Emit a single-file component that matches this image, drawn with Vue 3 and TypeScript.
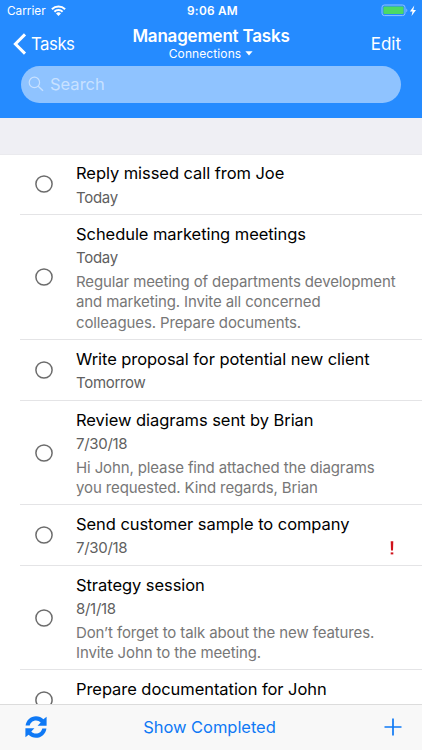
<script setup lang="ts">
interface Task {
  title: string
  due?: string
  notes?: string[]
  important?: boolean
  height: number
}

const tasks: Task[] = [
  { title: 'Reply missed call from Joe', due: 'Today', height: 60 },
  {
    title: 'Schedule marketing meetings',
    due: 'Today',
    notes: [
      'Regular meeting of departments development',
      'and marketing. Invite all concerned',
      'colleagues. Prepare documents.',
    ],
    height: 125,
  },
  { title: 'Write proposal for potential new client', due: 'Tomorrow', height: 61 },
  {
    title: 'Review diagrams sent by Brian',
    due: '7/30/18',
    notes: ['Hi John, please find attached the diagrams', 'you requested. Kind regards, Brian'],
    height: 104,
  },
  { title: 'Send customer sample to company', due: '7/30/18', important: true, height: 61 },
  {
    title: 'Strategy session',
    due: '8/1/18',
    notes: ['Don’t forget to talk about the new features.', 'Invite John to the meeting.'],
    height: 104,
  },
  { title: 'Prepare documentation for John', height: 61 },
]
</script>

<template>
  <div class="screen">
    <header class="header">
      <div class="status">
        <div class="carrier">
          <span>Carrier</span>
          <svg class="wifi" width="15" height="12" viewBox="0 0 15 12">
            <path d="M.9 4.200a9.400 9.400 0 0 1 13.200 0M3.400 6.800a5.800 5.800 0 0 1 8.200 0" fill="none" stroke="#fff" stroke-width="2" />
            <path d="M7.500 11 5 8.500a3.600 3.600 0 0 1 5 0z" fill="#fff" />
          </svg>
        </div>
        <span class="time">9:06 AM</span>
        <div class="power">
          <svg width="36" height="14" viewBox="0 0 36 14">
            <rect x="1" y="1" width="23" height="10.600" rx="2.400" fill="none" stroke="#8fc3ff" stroke-width="1" />
            <rect x="2.400" y="2.500" width="20.200" height="7.600" rx="1" fill="#4cd964" />
            <path d="M25.400 4.500v3.800c1.200-.5 1.200-3.300 0-3.800z" fill="#8fc3ff" />
            <path d="M33.300 1.400 28.900 7.500h2.600l-1 4.400 4.500-6h-2.700z" fill="#fff" />
          </svg>
        </div>
      </div>
      <nav class="nav">
        <div class="back">
          <svg width="14" height="22" viewBox="0 0 14 22">
            <path d="M12 1.400 2.400 11 12 20.600" fill="none" stroke="#fff" stroke-width="3" />
          </svg>
          <span>Tasks</span>
        </div>
        <div class="heading">
          <div class="heading-title">Management Tasks</div>
          <div class="heading-sub">
            <span>Connections</span>
            <svg width="8" height="5" viewBox="0 0 8 5"><path d="M.4.2h7.200L4 4.400z" fill="#fff" /></svg>
          </div>
        </div>
        <div class="edit">Edit</div>
      </nav>
      <div class="search">
        <svg width="16" height="16" viewBox="0 0 16 16">
          <circle cx="6.400" cy="6.400" r="5.200" fill="none" stroke="#c8e1ff" stroke-width="1.200" />
          <path d="m10.200 10.200 4.800 4.600" stroke="#c8e1ff" stroke-width="1.400" />
        </svg>
        <span>Search</span>
      </div>
    </header>
    <div class="gap"></div>
    <main class="list">
      <div v-for="task in tasks" :key="task.title" class="row" :style="{ height: task.height + 'px' }">
        <div class="check">
          <svg class="ring" width="18" height="18" viewBox="0 0 18 18">
            <circle cx="9" cy="9" r="8.100" fill="none" stroke="#6c6c6c" stroke-width="1.500" />
          </svg>
        </div>
        <div class="body">
          <div class="title">{{ task.title }}</div>
          <div v-if="task.due" class="due">
            <span>{{ task.due }}</span>
            <svg v-if="task.important" class="bang" width="4" height="14" viewBox="0 0 4 14">
              <path d="M.7.300h2.600l-.3 9.200H1z" fill="#d0121b" />
              <rect x=".7" y="11.400" width="2.600" height="2" fill="#d0121b" />
            </svg>
          </div>
          <div v-if="task.notes" class="notes">
            <div v-for="line in task.notes" :key="line">{{ line }}</div>
          </div>
        </div>
      </div>
    </main>
    <footer class="toolbar">
      <svg class="sync" width="22" height="22" viewBox="0 0 22 22" fill="#0f79f5">
        <path d="M.6 9.600C1.200 4.200 5.600.2 11 .2c2.900 0 5.500 1.100 7.400 3L21.600.8v9h-9l3.100-3.200C14.500 5.200 12.900 4.400 11 4.400c-3.200 0-5.600 2.200-6.300 5.200z" />
        <path d="M21.400 12.400C20.800 17.800 16.400 21.800 11 21.800c-2.900 0-5.500-1.100-7.400-3L.4 21.200v-9h9l-3.100 3.200c1.200 1.400 2.800 2.200 4.700 2.200 3.200 0 5.600-2.200 6.300-5.200z" />
      </svg>
      <span class="show">Show Completed</span>
      <svg class="plus" width="18" height="18" viewBox="0 0 18 18">
        <path d="M9 .5v17M.5 9h17" stroke="#0f79f5" stroke-width="1.700" />
      </svg>
    </footer>
  </div>
</template>

<style>
body {
  margin: 0;
}
</style>

<style scoped>
.screen {
  display: flex;
  flex-direction: column;
  width: 422px;
  height: 750px;
  overflow: hidden;
  background: #fff;
  font-family: Inter, 'Liberation Sans', sans-serif;
  white-space: nowrap;
}
.header {
  flex: none;
  height: 118px;
  background: #258bff;
  color: #fff;
}
.status {
  display: grid;
  grid-template-columns: 1fr auto 1fr;
  align-items: center;
  height: 22px;
  padding: 0 5px 0 7px;
  font-size: 12px;
}
.carrier {
  display: flex;
  align-items: center;
  gap: 5px;
  font-size: 11.8px;
}
.wifi {
  margin-bottom: 1px;
}
.time {
  padding-left: 1px;
  font-weight: 600;
  font-size: 11.8px;
  letter-spacing: 0.25px;
}
.power {
  display: flex;
  justify-content: flex-end;
}
.nav {
  display: grid;
  grid-template-columns: 1fr auto 1fr;
  align-items: center;
  height: 43px;
  padding: 0 13px;
}
.back {
  display: flex;
  align-items: center;
  gap: 4px;
  font-size: 16.8px;
  letter-spacing: -0.5px;
}
.heading {
  text-align: center;
}
.heading-title {
  font-size: 17px;
  font-weight: 600;
  line-height: 20px;
  letter-spacing: -0.2px;
}
.heading-sub {
  display: flex;
  align-items: center;
  justify-content: center;
  gap: 4px;
  font-size: 12px;
  line-height: 15px;
  letter-spacing: 0.1px;
}
.edit {
  padding-right: 8px;
  text-align: right;
  font-size: 17px;
}
.search {
  display: flex;
  align-items: center;
  gap: 6px;
  height: 37px;
  margin: 1px 21px 0;
  padding: 0 0 1px 7px;
  box-sizing: border-box;
  border-radius: 18.5px;
  background: #8fc3ff;
  color: #c8e1ff;
  font-size: 16.5px;
}
.gap {
  flex: none;
  height: 37px;
  box-sizing: border-box;
  background: #efeff4;
  border-bottom: 1px solid #eaeaee;
}
.list {
  flex: 1;
  min-height: 0;
  overflow: hidden;
}
.row {
  display: flex;
  box-sizing: border-box;
  margin-left: 20px;
  border-bottom: 1px solid #e4e4e6;
}
.check {
  display: flex;
  flex: none;
  align-items: center;
  width: 56px;
  padding-left: 15px;
  box-sizing: border-box;
}
.body {
  flex: 1;
  min-width: 0;
  padding: 7px 25px 0 0;
}
.row:first-child .body {
  padding-top: 6px;
}
.row:first-child .due {
  padding-top: 1px;
}
.row:first-child .ring {
  margin-bottom: 1px;
}
.title {
  color: #000;
  font-size: 16.5px;
  line-height: 24px;
  letter-spacing: -0.06px;
}
.due {
  display: flex;
  align-items: center;
  justify-content: space-between;
  color: #606060;
  font-size: 15px;
  line-height: 24px;
  letter-spacing: -0.3px;
}
.bang {
  margin-right: 3px;
}
.notes {
  padding-top: 2px;
  color: #777;
  font-size: 15px;
  line-height: 20.4px;
  letter-spacing: -0.12px;
}
.toolbar {
  display: grid;
  grid-template-columns: 22px 1fr 18px;
  align-items: center;
  flex: none;
  height: 46px;
  box-sizing: border-box;
  padding: 0 20px 1px 25px;
  border-top: 1px solid #dcdcdc;
  background: #f8f8f8;
  color: #0f79f5;
  font-size: 16.5px;
}
.show {
  padding-right: 12px;
  text-align: center;
  letter-spacing: -0.05px;
}
</style>
